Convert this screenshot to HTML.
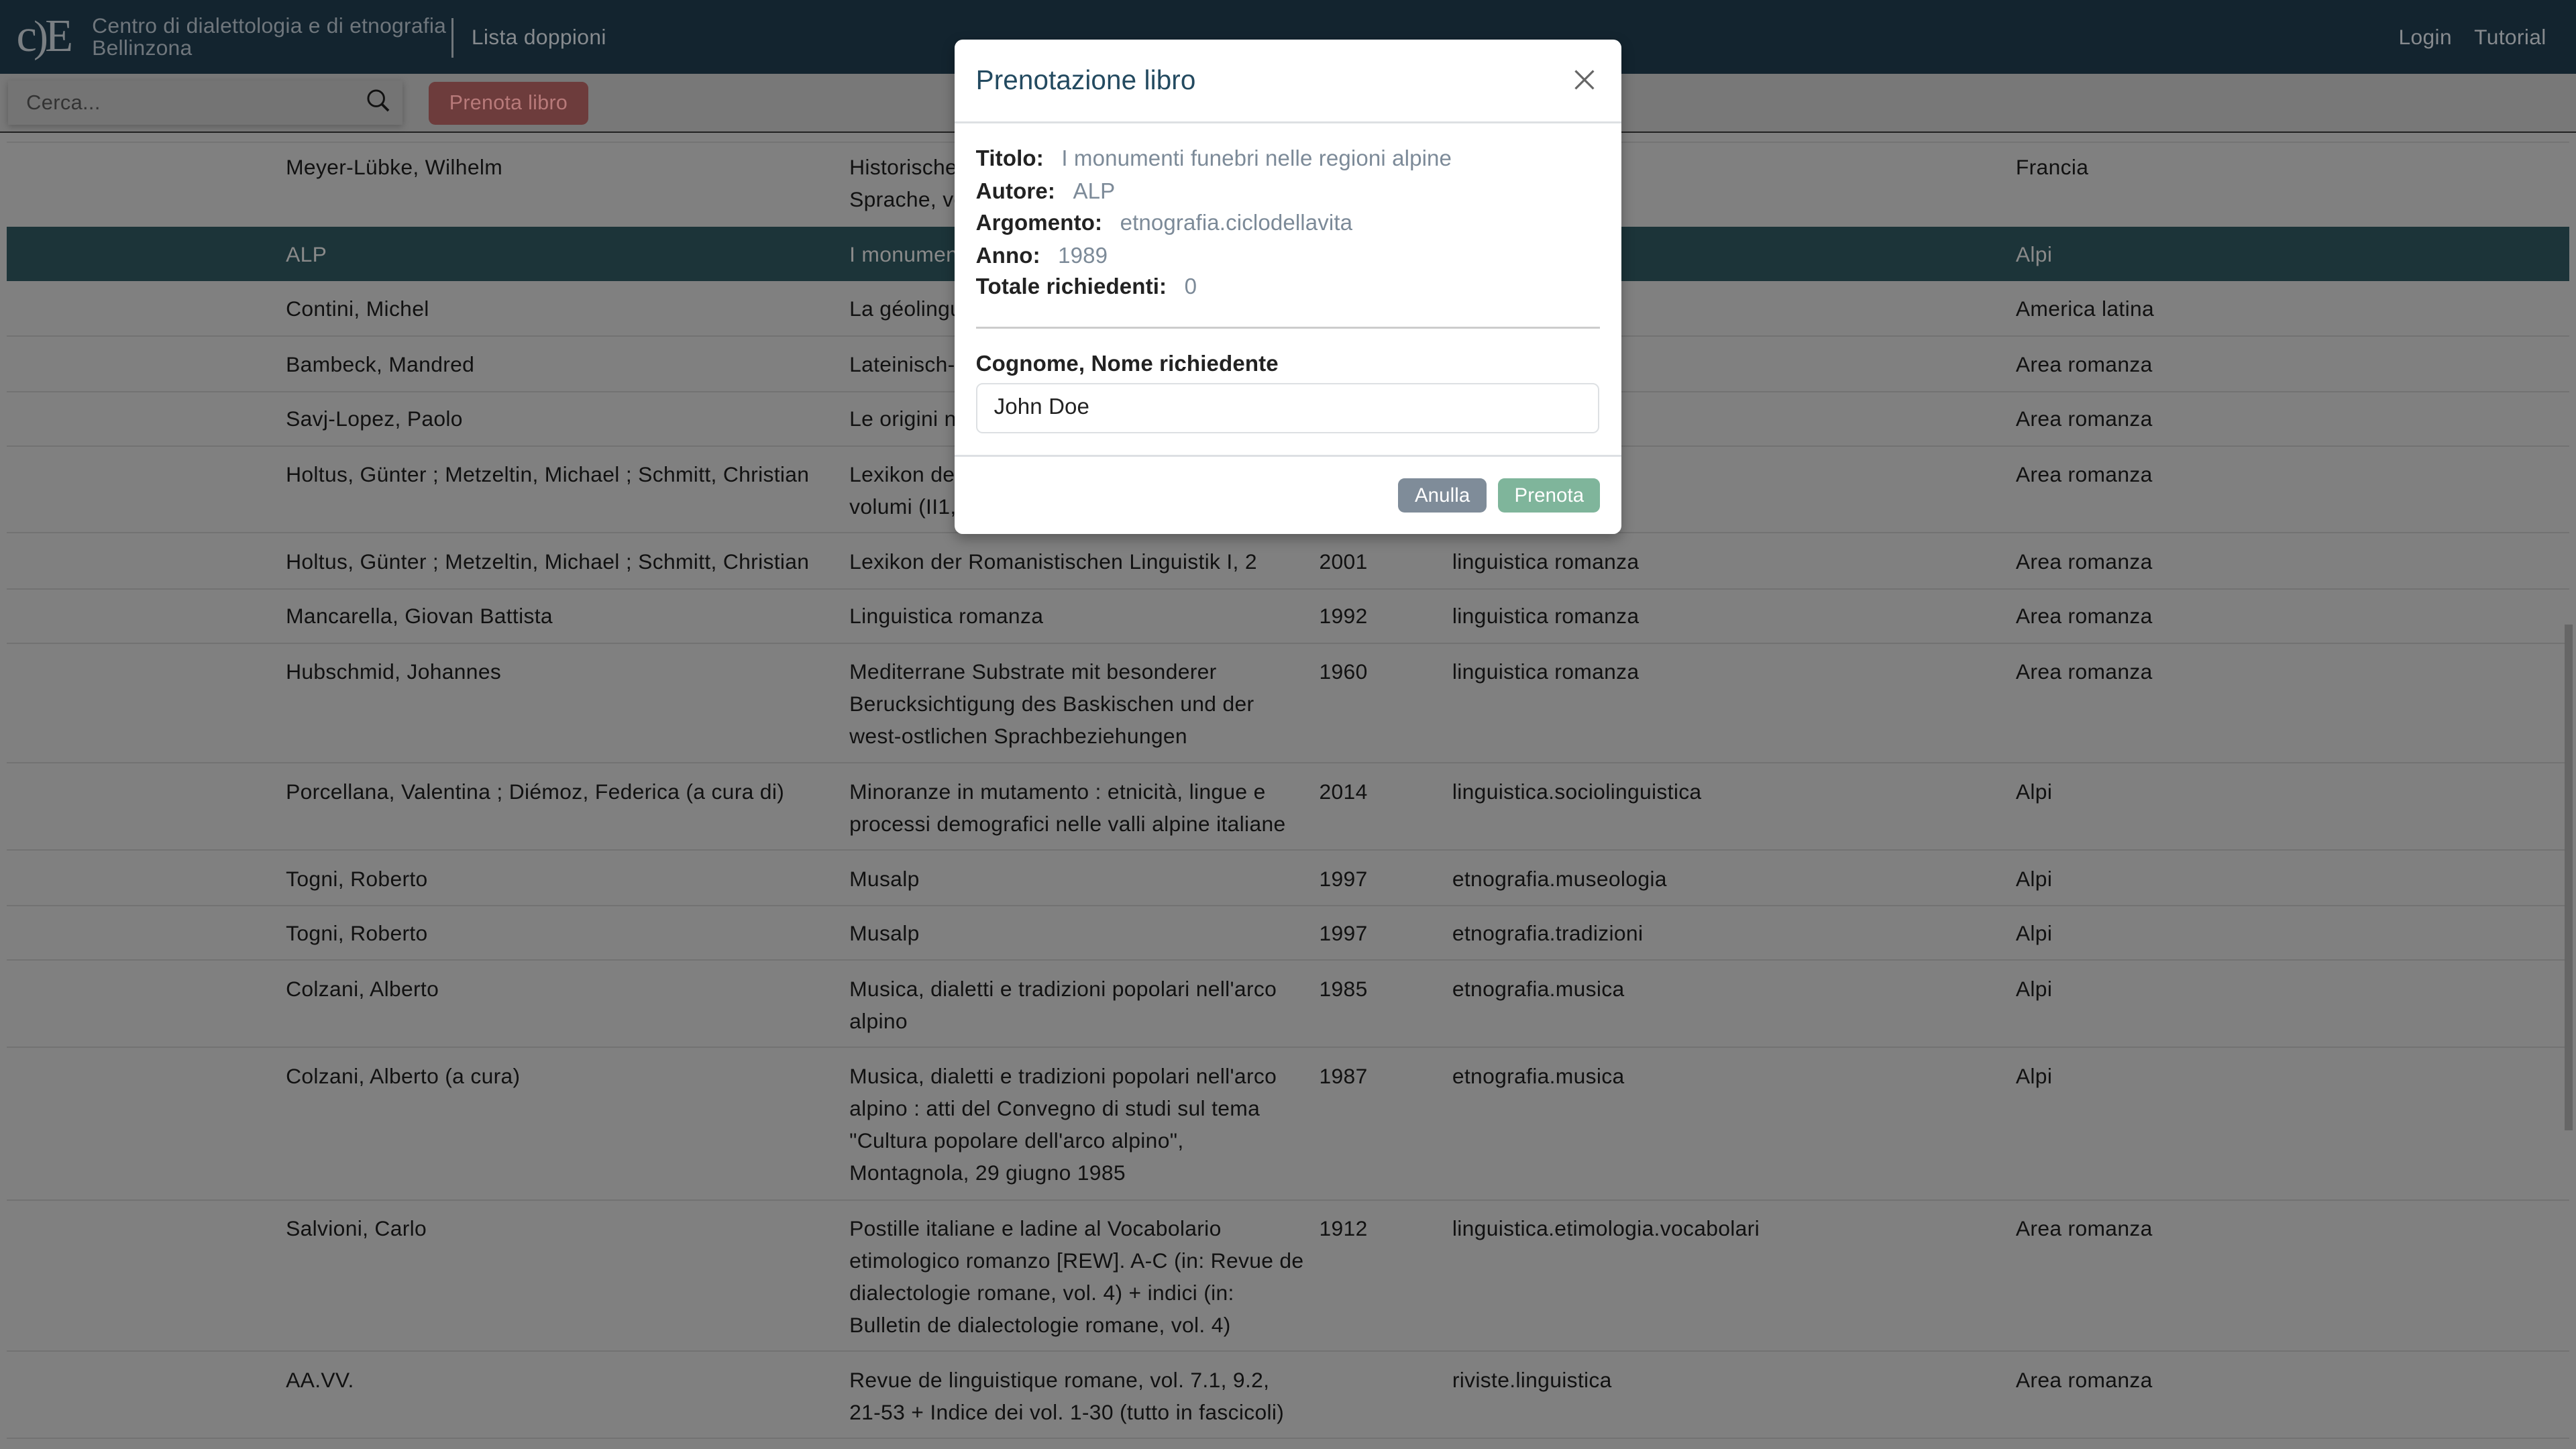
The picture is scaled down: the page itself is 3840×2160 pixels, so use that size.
<!DOCTYPE html>
<html><head><meta charset="utf-8">
<style>
html,body{margin:0;padding:0;width:3840px;height:2160px;overflow:hidden;background:#808080}
#w{zoom:2.44898;width:1568px;height:882px;position:relative;font-family:"Liberation Sans",sans-serif;font-size:13px;color:#111;letter-spacing:0.13px}
.hdr{position:absolute;left:0;top:0;width:1568px;height:45px;background:#13242f}
.tb{position:absolute;left:0;top:45px;width:1568px;height:35px;background:#787878;border-bottom:1px solid #222}
.r{position:absolute;left:4px;width:1560px;border-bottom:1px solid #727272}
.c{position:absolute;top:7px;line-height:19.6px;white-space:nowrap}
.a{left:170px}.t{left:513px}.y{left:799px}.g{left:880px}.z{left:1223px}
.hl{background:#1c3439;color:#8a8a8a}
.modal{position:absolute;left:581px;top:24px;width:406px;height:301px;background:#fff;border-radius:5px;box-shadow:0 3px 8px rgba(0,0,0,.3);letter-spacing:0.05px}
.lab{font-weight:bold;color:#222}
.val{color:#7c8a98;margin-left:7px}
.f{position:absolute;left:13px;line-height:19.6px;font-size:13.5px}
</style></head><body><div id="w">
<div class="hdr">
 <div style="position:absolute;left:10px;top:7px;font-family:'Liberation Serif',serif;font-size:28px;color:#7a7f83;letter-spacing:-2px;line-height:30px">c<span style="font-size:27px">)</span>E</div>
 <div style="position:absolute;left:56px;top:9px;color:#6f767c;font-size:13px;line-height:13.5px;letter-spacing:0.1px">Centro di dialettologia e di etnografia<br>Bellinzona</div>
 <div style="position:absolute;left:275px;top:11px;width:1px;height:24px;background:#70767b"></div>
 <div style="position:absolute;left:287px;top:15px;color:#868a8e;font-size:13px">Lista doppioni</div>
 <div style="position:absolute;left:1460px;top:15px;color:#868a8e;font-size:13px">Login</div>
 <div style="position:absolute;left:1506px;top:15px;color:#868a8e;font-size:13px">Tutorial</div>
</div>
<div class="tb">
 <div style="position:absolute;left:5px;top:4px;width:240px;height:27px;background:#747474;box-shadow:0 1px 4px rgba(0,0,0,.25)"></div>
 <div style="position:absolute;left:16px;top:10px;color:#333;font-size:12.6px">Cerca...</div>
 <svg style="position:absolute;left:223px;top:9px" width="15" height="15" viewBox="0 0 15 15"><circle cx="6" cy="6" r="4.8" fill="none" stroke="#111" stroke-width="1.2"/><path d="M9.5 9.5L13.5 13.5" stroke="#111" stroke-width="1.5"/></svg>
 <div style="position:absolute;left:261px;top:5px;width:97px;height:26px;background:#6d3c3c;border-radius:4px;color:#b87a7a;font-size:12.4px;line-height:26px;text-align:center">Prenota libro</div>
</div>

<div class="r" style="top:86px;height:0;border-bottom:1px solid #747474"></div>
<div class="r" style="top:85px;height:53px"><div class="c a">Meyer-Lübke, Wilhelm</div><div class="c t">Historische<br>Sprache, vo</div><div class="c g">grammatica</div><div class="c z">Francia</div></div>
<div class="r hl" style="top:138px;height:33px;border:none"><div class="c a">ALP</div><div class="c t">I monumen</div><div class="c g">ellavita</div><div class="c z">Alpi</div></div>
<div class="r" style="top:171px;height:33px"><div class="c a">Contini, Michel</div><div class="c t">La géolingu</div><div class="c g">afia</div><div class="c z">America latina</div></div>
<div class="r" style="top:205px;height:33px"><div class="c a">Bambeck, Mandred</div><div class="c t">Lateinisch-</div><div class="c g">ologia</div><div class="c z">Area romanza</div></div>
<div class="r" style="top:238px;height:33px"><div class="c a">Savj-Lopez, Paolo</div><div class="c t">Le origini n</div><div class="c g">za</div><div class="c z">Area romanza</div></div>
<div class="r" style="top:272px;height:52px"><div class="c a">Holtus, Günter ; Metzeltin, Michael ; Schmitt, Christian</div><div class="c t">Lexikon de<br>volumi (II1,</div><div class="c g">za</div><div class="c z">Area romanza</div></div>
<div class="r" style="top:325px;height:33px"><div class="c a">Holtus, Günter ; Metzeltin, Michael ; Schmitt, Christian</div><div class="c t">Lexikon der Romanistischen Linguistik I, 2</div><div class="c y">2001</div><div class="c g">linguistica romanza</div><div class="c z">Area romanza</div></div>
<div class="r" style="top:358px;height:33px"><div class="c a">Mancarella, Giovan Battista</div><div class="c t">Linguistica romanza</div><div class="c y">1992</div><div class="c g">linguistica romanza</div><div class="c z">Area romanza</div></div>
<div class="r" style="top:392px;height:72px"><div class="c a">Hubschmid, Johannes</div><div class="c t">Mediterrane Substrate mit besonderer<br>Berucksichtigung des Baskischen und der<br>west-ostlichen Sprachbeziehungen</div><div class="c y">1960</div><div class="c g">linguistica romanza</div><div class="c z">Area romanza</div></div>
<div class="r" style="top:465px;height:52px"><div class="c a">Porcellana, Valentina ; Diémoz, Federica (a cura di)</div><div class="c t">Minoranze in mutamento : etnicità, lingue e<br>processi demografici nelle valli alpine italiane</div><div class="c y">2014</div><div class="c g">linguistica.sociolinguistica</div><div class="c z">Alpi</div></div>
<div class="r" style="top:518px;height:33px"><div class="c a">Togni, Roberto</div><div class="c t">Musalp</div><div class="c y">1997</div><div class="c g">etnografia.museologia</div><div class="c z">Alpi</div></div>
<div class="r" style="top:551px;height:33px"><div class="c a">Togni, Roberto</div><div class="c t">Musalp</div><div class="c y">1997</div><div class="c g">etnografia.tradizioni</div><div class="c z">Alpi</div></div>
<div class="r" style="top:585px;height:52px"><div class="c a">Colzani, Alberto</div><div class="c t">Musica, dialetti e tradizioni popolari nell'arco<br>alpino</div><div class="c y">1985</div><div class="c g">etnografia.musica</div><div class="c z">Alpi</div></div>
<div class="r" style="top:638px;height:92px"><div class="c a">Colzani, Alberto (a cura)</div><div class="c t">Musica, dialetti e tradizioni popolari nell'arco<br>alpino : atti del Convegno di studi sul tema<br>"Cultura popolare dell'arco alpino",<br>Montagnola, 29 giugno 1985</div><div class="c y">1987</div><div class="c g">etnografia.musica</div><div class="c z">Alpi</div></div>
<div class="r" style="top:731px;height:91px"><div class="c a">Salvioni, Carlo</div><div class="c t">Postille italiane e ladine al Vocabolario<br>etimologico romanzo [REW]. A-C (in: Revue de<br>dialectologie romane, vol. 4) + indici (in:<br>Bulletin de dialectologie romane, vol. 4)</div><div class="c y">1912</div><div class="c g">linguistica.etimologia.vocabolari</div><div class="c z">Area romanza</div></div>
<div class="r" style="top:823px;height:52px"><div class="c a">AA.VV.</div><div class="c t">Revue de linguistique romane, vol. 7.1, 9.2,<br>21-53 + Indice dei vol. 1-30 (tutto in fascicoli)</div><div class="c g">riviste.linguistica</div><div class="c z">Area romanza</div></div>

<div style="position:absolute;left:1561px;top:380px;width:5px;height:308px;background:#666"></div>

<div class="modal">
 <div style="position:absolute;left:13px;top:15px;font-size:16.5px;color:#234a60">Prenotazione libro</div>
 <svg style="position:absolute;left:377px;top:18px" width="13" height="13" viewBox="0 0 13 13"><path d="M1 1L12 12M12 1L1 12" stroke="#666" stroke-width="1.3"/></svg>
 <div style="position:absolute;left:0;top:50px;width:406px;height:1px;background:#dde0e3"></div>
 <div class="f" style="top:63px"><span class="lab">Titolo:</span> <span class="val">I monumenti funebri nelle regioni alpine</span></div>
 <div class="f" style="top:83px"><span class="lab">Autore:</span> <span class="val">ALP</span></div>
 <div class="f" style="top:102px"><span class="lab">Argomento:</span> <span class="val">etnografia.ciclodellavita</span></div>
 <div class="f" style="top:122px"><span class="lab">Anno:</span> <span class="val">1989</span></div>
 <div class="f" style="top:141px"><span class="lab">Totale richiedenti:</span> <span class="val">0</span></div>
 <div style="position:absolute;left:13px;top:175px;width:380px;height:1px;background:#ccc"></div>
 <div class="f lab" style="top:188px">Cognome, Nome richiedente</div>
 <div style="position:absolute;left:13px;top:209px;width:378px;height:29px;border:1px solid #dde0e3;border-radius:4px"></div>
 <div class="f" style="left:24px;top:214px;color:#222">John Doe</div>
 <div style="position:absolute;left:0;top:253px;width:406px;height:1px;background:#dde0e3"></div>
 <div style="position:absolute;left:270px;top:267px;width:54px;height:21px;background:#7f8c99;border-radius:4px;color:#fff;font-size:12px;line-height:21px;text-align:center">Anulla</div>
 <div style="position:absolute;left:331px;top:267px;width:62px;height:21px;background:#7fb59b;border-radius:4px;color:#fff;font-size:12px;line-height:21px;text-align:center">Prenota</div>
</div>
</div></body></html>
